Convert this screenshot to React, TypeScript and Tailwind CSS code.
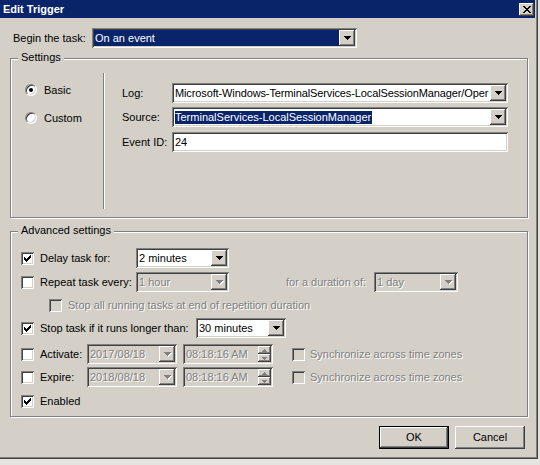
import React from 'react';

// classic 3D edge styles
const sunken =
  'shadow-[inset_1px_1px_0_#808080,inset_-1px_-1px_0_#ffffff,inset_2px_2px_0_#404040,inset_-2px_-2px_0_#d4d0c8]';
const raised =
  'shadow-[inset_-1px_-1px_0_#404040,inset_1px_1px_0_#ffffff,inset_-2px_-2px_0_#808080,inset_2px_2px_0_#d4d0c8]';
const etched = 'border border-[#808080] shadow-[1px_1px_0_#ffffff,inset_1px_1px_0_#ffffff]';
const grayText = 'text-[#808080] [text-shadow:1px_1px_0_#ffffff]';

const Arrow = ({ disabled }: { disabled?: boolean }) => (
  <svg width="8" height="5" viewBox="0 0 8 5" shapeRendering="crispEdges">
    {disabled && <path d="M1 1h7v1h-1v1h-1v1h-1v1h-1v-1h-1v-1h-1v-1h-1z" fill="#ffffff" />}
    <path d="M0 0h7v1h-1v1h-1v1h-1v1h-1v-1h-1v-1h-1v-1h-1z" fill={disabled ? '#808080' : '#000000'} />
  </svg>
);

const DropButton = ({ disabled }: { disabled?: boolean }) => (
  <div className={`w-[16px] h-[16px] shrink-0 bg-[#d4d0c8] ${raised} flex items-center justify-center pl-[1px] pt-[1px]`}>
    <Arrow disabled={disabled} />
  </div>
);

interface SelectProps {
  value: React.ReactNode;
  className: string;
  disabled?: boolean;
  focused?: boolean;
}

const Select: React.FC<SelectProps> = ({ value, className, disabled, focused }) => (
  <div className={`h-[20px] p-[2px] flex shrink-0 ${sunken} ${disabled ? 'bg-[#d4d0c8]' : 'bg-white'} ${className}`}>
    <div
      className={`flex-1 min-w-0 flex items-center pl-[1px] overflow-hidden whitespace-nowrap ${
        focused ? 'bg-[#0a246a] text-white' : disabled ? grayText : ''
      }`}
    >
      {value}
    </div>
    <DropButton disabled={disabled} />
  </div>
);

const Check = ({ checked, disabled }: { checked?: boolean; disabled?: boolean }) => (
  <div
    className={`w-[13px] h-[13px] shrink-0 ${sunken} ${disabled ? 'bg-[#d4d0c8]' : 'bg-white'} flex items-center justify-center`}
  >
    {checked && (
      <svg width="7" height="7" viewBox="0 0 7 7" shapeRendering="crispEdges">
        <path
          d="M6 0h1v1h-1z M5 1h2v1h-2z M0 2h1v1h-1z M4 2h3v1h-3z M0 3h2v1h-2z M3 3h3v1h-3z M0 4h5v1h-5z M1 5h3v1h-3z M2 6h1v1h-1z"
          fill="#000000"
        />
      </svg>
    )}
  </div>
);

const Radio = ({ checked }: { checked?: boolean }) => (
  <div className="w-[12px] h-[12px] shrink-0 rounded-full border border-t-[#808080] border-l-[#808080] border-r-white border-b-white bg-white shadow-[inset_1px_1px_0_#404040,inset_-1px_-1px_0_#d4d0c8] flex items-center justify-center">
    {checked && <div className="w-[4px] h-[4px] rounded-full bg-black" />}
  </div>
);

const Spinner = () => (
  <div className="w-[13px] shrink-0 flex flex-col">
    <div className={`h-[8px] bg-[#d4d0c8] ${raised} flex items-center justify-center`}>
      <svg width="5" height="3" viewBox="0 0 5 3" shapeRendering="crispEdges">
        <path d="M2 0h1v1h1v1h1v1h-5v-1h1v-1h1z" fill="#808080" />
      </svg>
    </div>
    <div className={`h-[8px] bg-[#d4d0c8] ${raised} flex items-center justify-center`}>
      <svg width="5" height="3" viewBox="0 0 5 3" shapeRendering="crispEdges">
        <path d="M0 0h5v1h-1v1h-1v1h-1v-1h-1v-1h-1z" fill="#808080" />
      </svg>
    </div>
  </div>
);

const TimeField = ({ value }: { value: string }) => (
  <div className={`w-[90px] h-[20px] p-[2px] flex shrink-0 bg-[#d4d0c8] ${sunken}`}>
    <div className={`flex-1 flex items-center pl-[1px] whitespace-nowrap ${grayText}`}>{value}</div>
    <Spinner />
  </div>
);

const App: React.FC = () => {
  return (
    <div className="w-[540px] h-[465px] bg-[#e6e4e0] font-['Liberation_Sans',Arial,sans-serif] text-[11px] leading-[13px] text-black">
      <div className="w-[538px] h-[459px] bg-[#d4d0c8] border-r border-b border-[#404040] shadow-[inset_-1px_-1px_0_#808080] flex flex-col">
        {/* Title bar */}
        <div className="h-[18px] mr-[2px] bg-[#0a246a] flex items-center justify-between pl-[3px] pr-[1px]">
          <span className="text-white font-bold pt-[1px]">Edit Trigger</span>
          <div className={`w-[15px] h-[13px] bg-[#d4d0c8] ${raised} flex items-center justify-center`}>
            <svg width="8" height="7" viewBox="0 0 8 7" shapeRendering="crispEdges">
              <path
                d="M0 0h2v1h1v1h2v-1h1v-1h2v1h-1v1h-1v1h-1v1h1v1h1v1h1v1h-2v-1h-1v-1h-2v1h-1v1h-2v-1h1v-1h1v-1h1v-1h-1v-1h-1v-1h-1z"
                fill="#000000"
              />
            </svg>
          </div>
        </div>

        {/* Begin the task */}
        <div className="mt-[10px] flex items-center h-[20px]">
          <span className="ml-[13px] w-[79px]">Begin the task:</span>
          <Select className="w-[265px]" value="On an event" focused />
        </div>

        {/* Settings */}
        <div className={`relative mt-[10px] ml-[10px] w-[518px] h-[160px] shrink-0 flex ${etched}`}>
          <span className="absolute -top-[8px] left-[7px] px-[3px] bg-[#d4d0c8]">Settings</span>
          <div className="w-[92px] pl-[14px] pt-[24px] flex flex-col">
            <div className="h-[14px] flex items-center gap-[7px]">
              <Radio checked />
              <span>Basic</span>
            </div>
            <div className="mt-[14px] h-[14px] flex items-center gap-[7px]">
              <Radio />
              <span>Custom</span>
            </div>
          </div>
          <div className="mt-[14px] h-[136px] w-[2px] border-l border-[#808080] bg-white" />
          <div className="ml-[17px] pt-[24px] flex flex-col">
            <div className="h-[20px] flex items-center">
              <span className="w-[50px]">Log:</span>
              <Select
                className="w-[336px]"
                value={
                  <span className="tracking-[-0.12px]">Microsoft-Windows-TerminalServices-LocalSessionManager/Oper</span>
                }
              />
            </div>
            <div className="mt-[4px] h-[20px] flex items-center">
              <span className="w-[50px]">Source:</span>
              <Select
                className="w-[336px]"
                value={<span className="bg-[#0a246a] text-white pr-[1px]">TerminalServices-LocalSessionManager</span>}
              />
            </div>
            <div className="mt-[5px] h-[20px] flex items-center">
              <span className="w-[50px]">Event ID:</span>
              <div className={`w-[336px] h-[20px] p-[2px] pl-[3px] flex items-center bg-white ${sunken}`}>24</div>
            </div>
          </div>
        </div>

        {/* Advanced settings */}
        <div className={`relative mt-[13px] ml-[10px] w-[518px] h-[186px] shrink-0 flex flex-col pt-[16px] pl-[10px] ${etched}`}>
          <span className="absolute -top-[8px] left-[7px] px-[3px] bg-[#d4d0c8]">Advanced settings</span>

          <div className="h-[20px] flex items-center">
            <Check checked />
            <span className="ml-[6px] w-[96px]">Delay task for:</span>
            <Select className="w-[93px]" value="2 minutes" />
          </div>

          <div className="mt-[4px] h-[20px] flex items-center">
            <Check />
            <span className="ml-[6px] w-[96px]">Repeat task every:</span>
            <Select className="w-[93px]" value="1 hour" disabled />
            <span className={`ml-[57px] w-[88px] ${grayText}`}>for a duration of:</span>
            <Select className="w-[84px]" value="1 day" disabled />
          </div>

          <div className="mt-[6px] h-[14px] flex items-center pl-[28px]">
            <Check disabled />
            <span className={`ml-[6px] ${grayText}`}>Stop all running tasks at end of repetition duration</span>
          </div>

          <div className="mt-[6px] h-[20px] flex items-center">
            <Check checked />
            <span className="ml-[6px] w-[156px]">Stop task if it runs longer than:</span>
            <Select className="w-[90px]" value="30 minutes" />
          </div>

          <div className="mt-[6px] h-[20px] flex items-center">
            <Check />
            <span className="ml-[6px] w-[47px]">Activate:</span>
            <Select className="w-[90px]" value="2017/08/18" disabled />
            <div className="ml-[6px]">
              <TimeField value="08:18:16 AM" />
            </div>
            <div className="ml-[19px]">
              <Check disabled />
            </div>
            <span className={`ml-[5px] ${grayText}`}>Synchronize across time zones</span>
          </div>

          <div className="mt-[3px] h-[20px] flex items-center">
            <Check />
            <span className="ml-[6px] w-[47px]">Expire:</span>
            <Select className="w-[90px]" value="2018/08/18" disabled />
            <div className="ml-[6px]">
              <TimeField value="08:18:16 AM" />
            </div>
            <div className="ml-[19px]">
              <Check disabled />
            </div>
            <span className={`ml-[5px] ${grayText}`}>Synchronize across time zones</span>
          </div>

          <div className="mt-[7px] h-[14px] flex items-center">
            <Check checked />
            <span className="ml-[6px]">Enabled</span>
          </div>
        </div>

        {/* Buttons */}
        <div className="mt-[9px] ml-[379px] flex gap-[6px]">
          <button className={`w-[70px] h-[23px] bg-[#d4d0c8] border border-black ${raised} flex items-center justify-center`}>
            OK
          </button>
          <button className={`w-[70px] h-[23px] bg-[#d4d0c8] ${raised} flex items-center justify-center`}>
            Cancel
          </button>
        </div>
      </div>
    </div>
  );
};

export default App;
